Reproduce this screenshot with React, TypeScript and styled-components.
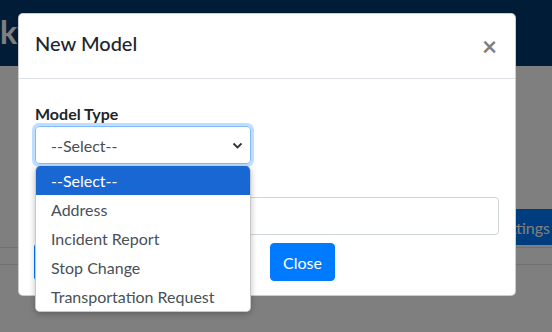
import React from "react";
import styled, { createGlobalStyle } from "styled-components";

const FONT = `"Lato", "Noto Sans", sans-serif`;

const GlobalStyle = createGlobalStyle`
  html, body { margin: 0; padding: 0; }
  *, *::before, *::after { box-sizing: border-box; }
  body {
    width: 552px;
    height: 332px;
    overflow: hidden;
    font-family: ${FONT};
    background: #fff;
  }
`;

const Page = styled.div`
  position: relative;
  width: 552px;
  height: 332px;
  overflow: hidden;
  background: #fff;
`;

const Navbar = styled.header`
  height: 66px;
  background: #00386f;
  display: flex;
  align-items: center;
  overflow: hidden;
`;

const Brand = styled.div`
  margin-left: -62px;
  margin-top: -4px;
  color: #fff;
  font-weight: 700;
  font-size: 32px;
  white-space: nowrap;
`;

const Content = styled.main`
  padding-top: 143px;
`;

const Toolbar = styled.div`
  height: 39px;
  display: flex;
  justify-content: flex-end;
  align-items: flex-start;
  border-bottom: 1px solid #dee2e6;
`;

const PageButton = styled.button`
  height: 36px;
  margin-right: -10px;
  padding: 0 12px;
  border: none;
  border-radius: 4px 0 0 4px;
  background: #007bff;
  color: #fff;
  font: 16px ${FONT};
`;

const TableHead = styled.div`
  height: 17px;
  border-bottom: 1px solid #dee2e6;
`;

const Backdrop = styled.div`
  position: absolute;
  inset: 0;
  background: rgba(0, 0, 0, 0.5);
`;

const Modal = styled.div`
  position: absolute;
  left: 18px;
  top: 13px;
  width: 498px;
  background: #fff;
  border: 1px solid rgba(0, 0, 0, 0.2);
  border-radius: 5px;
  color: #212529;
`;

const Header = styled.div`
  display: flex;
  align-items: center;
  justify-content: space-between;
  height: 65px;
  padding: 0 16px 7px;
  border-bottom: 1px solid #dee2e6;
`;

const Title = styled.h5`
  margin: 0;
  font-size: 20px;
  font-weight: 500;
  line-height: 30px;
`;

const CloseX = styled.span`
  font-size: 26px;
  font-weight: 700;
  line-height: 1;
  color: #000;
  opacity: 0.5;
  margin-right: 2px;
  margin-top: 6px;
`;

const Body = styled.div`
  padding: 23px 16px 14px;
`;

const Field = styled.div<{ $gap?: number }>`
  margin-top: ${(p) => p.$gap ?? 0}px;
`;

const Label = styled.label<{ $mb?: number }>`
  display: block;
  font-weight: 700;
  font-size: 16px;
  line-height: 24px;
  margin-bottom: ${(p) => p.$mb ?? 0}px;
`;

const SelectWrap = styled.div`
  position: relative;
  width: 216px;
`;

const SelectBox = styled.div`
  height: 38px;
  border: 1px solid #80bdff;
  border-radius: 4px;
  box-shadow: 0 0 0 3px rgba(0, 123, 255, 0.25);
  display: flex;
  align-items: center;
  justify-content: space-between;
  padding: 0 7px 0 15px;
  color: #495057;
  font-size: 16px;
`;

const Input = styled.div`
  height: 38px;
  border: 1px solid #ced4da;
  border-radius: 4px;
`;

const Popup = styled.ul`
  position: absolute;
  left: 0;
  top: 40px;
  width: 216px;
  margin: 0;
  padding: 0;
  list-style: none;
  background: #fff;
  border: 1px solid #c8c8c8;
  border-top: none;
  border-radius: 5px;
  overflow: hidden;
  box-shadow: 0 2px 6px rgba(0, 0, 0, 0.25);
  z-index: 2;
`;

const Option = styled.li<{ $active?: boolean }>`
  height: 29px;
  line-height: 29px;
  padding-left: 15px;
  font-size: 16px;
  white-space: nowrap;
  color: ${(p) => (p.$active ? "#fff" : "#495057")};
  background: ${(p) => (p.$active ? "#1967d2" : "#fff")};
`;

const Actions = styled.div`
  display: flex;
  align-items: flex-start;
  margin-top: 8px;
`;

const Button = styled.button<{ $w?: number; $ml?: number }>`
  height: 38px;
  width: ${(p) => (p.$w ? `${p.$w}px` : "auto")};
  margin-left: ${(p) => p.$ml ?? 0}px;
  padding: 0 12px;
  border: 1px solid #007bff;
  border-radius: 4px;
  background: #007bff;
  color: #fff;
  font: 16px ${FONT};
`;

const options = ["--Select--", "Address", "Incident Report", "Stop Change", "Transportation Request"];

export default function App() {
  return (
    <Page>
      <GlobalStyle />
      <Navbar>
        <Brand>Workflow</Brand>
      </Navbar>
      <Content>
        <Toolbar>
          <PageButton>Settings</PageButton>
        </Toolbar>
        <TableHead />
      </Content>
      <Backdrop />
      <Modal>
        <Header>
          <Title>New Model</Title>
          <CloseX>×</CloseX>
        </Header>
        <Body>
          <Field>
            <Label>Model Type</Label>
            <SelectWrap>
              <SelectBox>
                <span>--Select--</span>
                <svg width="11" height="7" viewBox="0 0 11 7">
                  <path d="M1.5 1.5l4 4 4-4" fill="none" stroke="#333" strokeWidth="1.8" />
                </svg>
              </SelectBox>
              <Popup>
                {options.map((o, i) => (
                  <Option key={o} $active={i === 0}>
                    {o}
                  </Option>
                ))}
              </Popup>
            </SelectWrap>
          </Field>
          <Field $gap={1}>
            <Label $mb={8}>Name</Label>
            <Input />
          </Field>
          <Actions>
            <Button $w={200} $ml={-1}>Save</Button>
            <Button $ml={36}>Close</Button>
          </Actions>
        </Body>
      </Modal>
    </Page>
  );
}
